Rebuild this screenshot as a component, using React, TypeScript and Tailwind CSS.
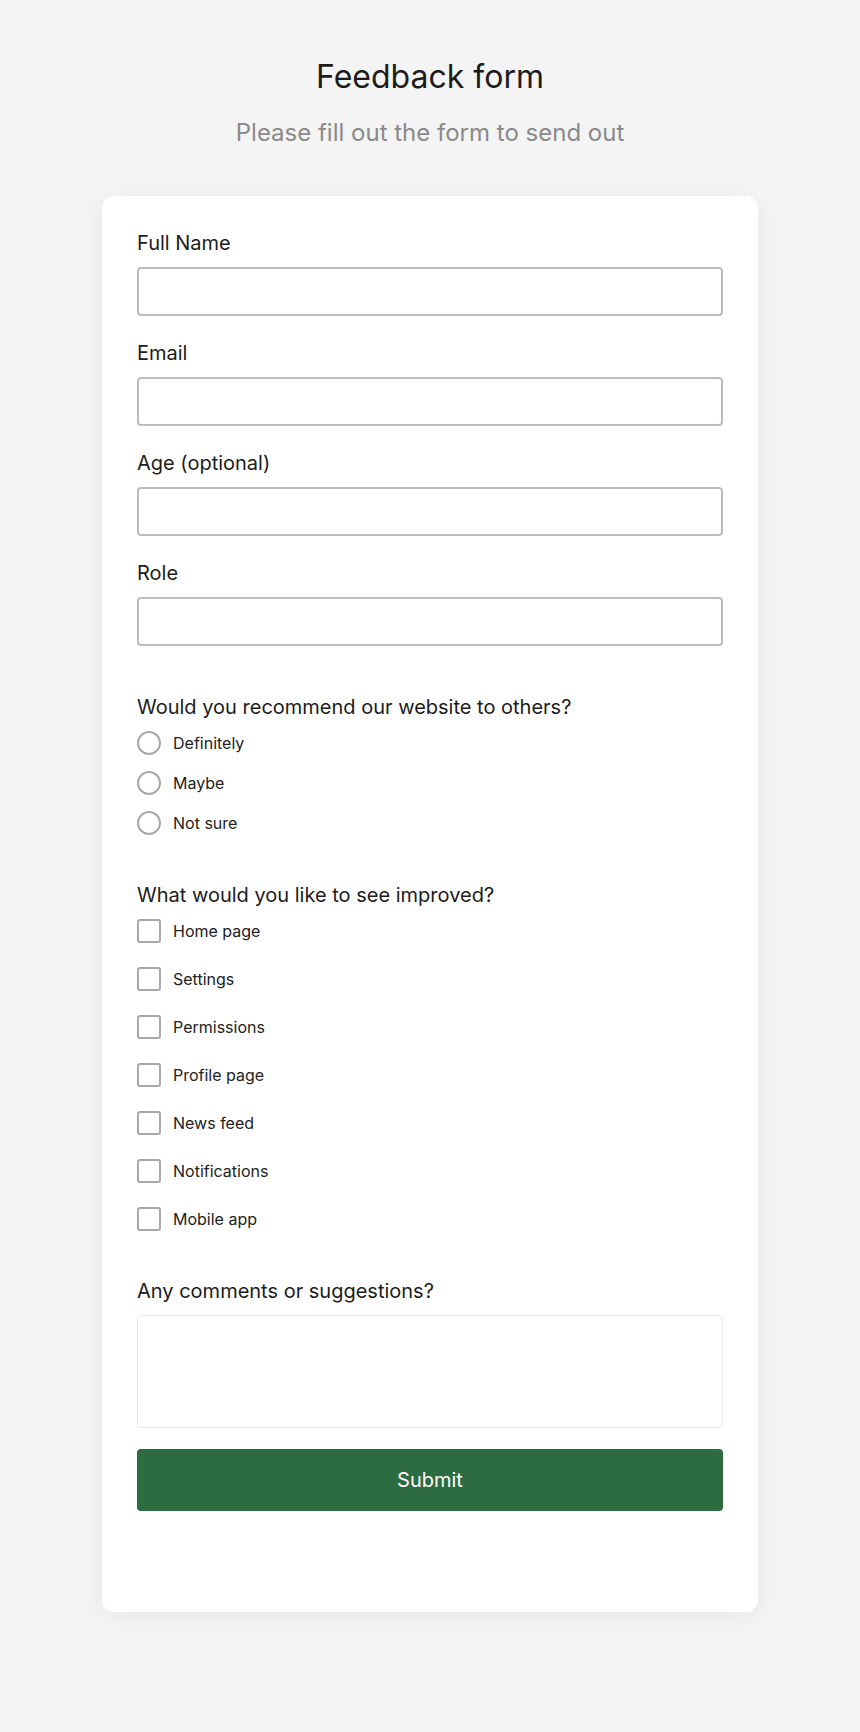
import { useState } from "react";

const fields = ["Full Name", "Email", "Age (optional)", "Role"];

const recommendOptions = ["Definitely", "Maybe", "Not sure"];

const improvements = [
  "Home page",
  "Settings",
  "Permissions",
  "Profile page",
  "News feed",
  "Notifications",
  "Mobile app",
];

export default function App() {
  const [recommend, setRecommend] = useState("");
  const [checked, setChecked] = useState<string[]>([]);

  const toggle = (item: string) => {
    setChecked((prev) =>
      prev.includes(item) ? prev.filter((p) => p !== item) : [...prev, item]
    );
  };

  return (
    <div className="min-h-screen bg-[#f4f4f4] pt-[57px] font-['Inter',sans-serif] text-[#1c1c1c]">
      {/* HEADER */}
      <h1 className="text-center text-[32px] leading-[40px] font-normal">
        Feedback form
      </h1>
      <p className="mt-[20px] text-center text-[24px] leading-[32px] text-[#8a8a8a]">
        Please fill out the form to send out
      </p>

      {/* CARD */}
      <form
        onSubmit={(e) => e.preventDefault()}
        className="mx-auto mt-[47px] flex w-[656px] flex-col rounded-xl bg-white px-[35px] pt-[33px] pb-[101px] shadow-[0_4px_24px_rgba(0,0,0,0.06)]"
      >
        {/* TEXT FIELDS */}
        <div className="flex flex-col gap-[23px]">
          {fields.map((f) => (
            <label key={f} className="flex flex-col">
              <span className="text-xl leading-7">{f}</span>
              <input
                type="text"
                className="mt-[10px] h-[49px] w-full rounded-[4px] border-2 border-[#bcbcbc] bg-white px-3 text-base outline-none"
              />
            </label>
          ))}
        </div>

        {/* RADIOS */}
        <div className="mt-[47px]">
          <p className="text-xl leading-7">
            Would you recommend our website to others?
          </p>
          <div className="mt-[10px] flex flex-col gap-4">
            {recommendOptions.map((o) => (
              <label key={o} className="flex h-6 items-center gap-3">
                <input
                  type="radio"
                  name="recommend"
                  checked={recommend === o}
                  onChange={() => setRecommend(o)}
                  className="m-0 h-6 w-6 shrink-0 appearance-none rounded-full border-2 border-[#a9a9a9] bg-white checked:border-[7px] checked:border-[#2d6b40]"
                />
                <span className="text-base leading-6 text-[#222]">{o}</span>
              </label>
            ))}
          </div>
        </div>

        {/* CHECKBOXES */}
        <div className="mt-[46px]">
          <p className="text-xl leading-7">What would you like to see improved?</p>
          <div className="mt-[10px] flex flex-col gap-6">
            {improvements.map((item) => (
              <label key={item} className="flex h-6 items-center gap-3">
                <input
                  type="checkbox"
                  checked={checked.includes(item)}
                  onChange={() => toggle(item)}
                  className="m-0 h-6 w-6 shrink-0 appearance-none rounded-[3px] border-2 border-[#a9a9a9] bg-white checked:border-[#2d6b40] checked:bg-[#2d6b40]"
                />
                <span className="text-base leading-6 text-[#222]">{item}</span>
              </label>
            ))}
          </div>
        </div>

        {/* COMMENTS */}
        <div className="mt-[46px]">
          <p className="text-xl leading-7">Any comments or suggestions?</p>
          <textarea className="mt-[10px] block h-[113px] w-full resize-none rounded-[4px] border border-[#e8e8e8] p-3 text-base outline-none" />
        </div>

        <button
          type="submit"
          className="mt-[21px] h-[62px] w-full rounded-[4px] bg-[#2d6b40] text-xl text-white"
        >
          Submit
        </button>
      </form>
    </div>
  );
}
